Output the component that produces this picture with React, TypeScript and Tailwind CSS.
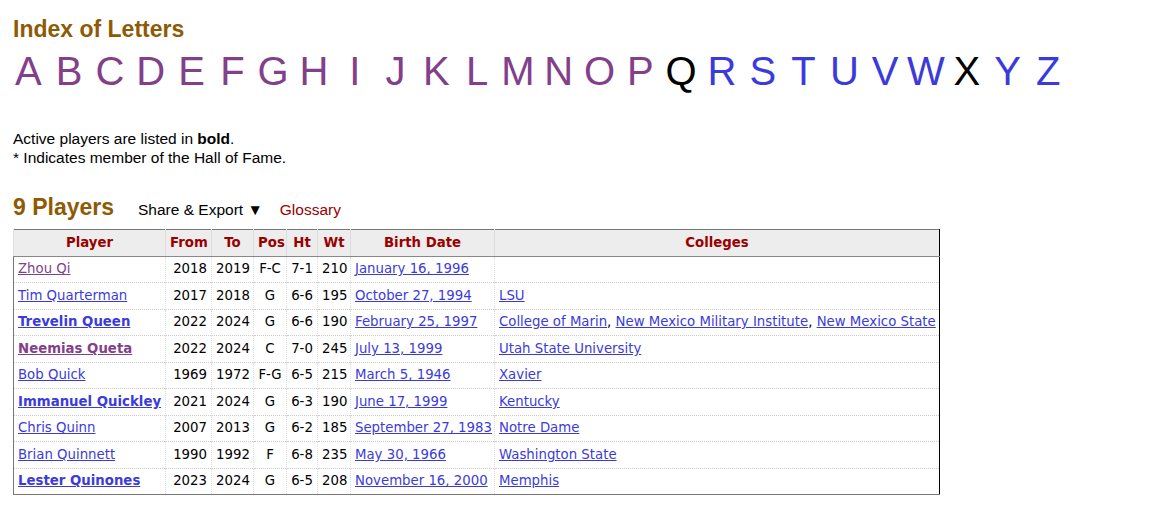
import React from 'react';

const LETTERS = 'ABCDEFGHIJKLMNOPQRSTUVWXYZ'.split('');
const VISITED = 'ABCDEFGHIJKLMNOP';

type Player = {
    name: string;
    active?: boolean;
    visited?: boolean;
    from: string;
    to: string;
    pos: string;
    ht: string;
    wt: string;
    birth: string;
    colleges: string[];
};

const players: Player[] = [
    { name: 'Zhou Qi', visited: true, from: '2018', to: '2019', pos: 'F-C', ht: '7-1', wt: '210', birth: 'January 16, 1996', colleges: [] },
    { name: 'Tim Quarterman', from: '2017', to: '2018', pos: 'G', ht: '6-6', wt: '195', birth: 'October 27, 1994', colleges: ['LSU'] },
    { name: 'Trevelin Queen', active: true, from: '2022', to: '2024', pos: 'G', ht: '6-6', wt: '190', birth: 'February 25, 1997', colleges: ['College of Marin', 'New Mexico Military Institute', 'New Mexico State'] },
    { name: 'Neemias Queta', active: true, visited: true, from: '2022', to: '2024', pos: 'C', ht: '7-0', wt: '245', birth: 'July 13, 1999', colleges: ['Utah State University'] },
    { name: 'Bob Quick', from: '1969', to: '1972', pos: 'F-G', ht: '6-5', wt: '215', birth: 'March 5, 1946', colleges: ['Xavier'] },
    { name: 'Immanuel Quickley', active: true, from: '2021', to: '2024', pos: 'G', ht: '6-3', wt: '190', birth: 'June 17, 1999', colleges: ['Kentucky'] },
    { name: 'Chris Quinn', from: '2007', to: '2013', pos: 'G', ht: '6-2', wt: '185', birth: 'September 27, 1983', colleges: ['Notre Dame'] },
    { name: 'Brian Quinnett', from: '1990', to: '1992', pos: 'F', ht: '6-8', wt: '235', birth: 'May 30, 1966', colleges: ['Washington State'] },
    { name: 'Lester Quinones', active: true, from: '2023', to: '2024', pos: 'G', ht: '6-5', wt: '208', birth: 'November 16, 2000', colleges: ['Memphis'] },
];

const th = 'h-[27px] pt-[1px] px-[4px] font-bold text-[#990000] text-center border-l border-l-[#dddddd] border-b border-b-[#888888] whitespace-nowrap overflow-hidden';
const td = 'h-[26.5px] px-[4px] border-l border-l-[#dddddd] border-t border-dotted border-t-[#cccccc] whitespace-nowrap overflow-visible';
const link = 'underline text-[#3b3bdb]';

export default function App() {
    return (
        <div className="min-h-screen bg-white pl-[13px] pt-[16px] text-black" style={{ fontFamily: '"Liberation Sans", Arial, sans-serif' }}>
            <h2 className="text-[23px] leading-[26.4px] font-bold text-[#8f5a04]">Index of Letters</h2>
            <div className="flex mt-[5px] -ml-[5px] text-[40px] leading-[48px]">
                {LETTERS.map(l => (
                    <span
                        key={l}
                        className={`w-[40.8px] text-center ${l === 'Q' || l === 'X' ? 'text-black' : VISITED.includes(l) ? 'text-[#833f8a]' : 'text-[#3b3bdb]'}`}
                    >
                        {l}
                    </span>
                ))}
            </div>

            <div className="mt-[34px] text-[15.5px] leading-[19px]">
                <p>Active players are listed in <b>bold</b>.</p>
                <p>* Indicates member of the Hall of Fame.</p>
            </div>

            <div className="flex items-baseline mt-[27px]">
                <h2 className="text-[23px] leading-[26.4px] font-bold text-[#8f5a04]">9 Players</h2>
                <span className="ml-[24px] text-[15.5px]">Share &amp; Export ▼</span>
                <span className="ml-[17px] text-[15.5px] text-[#990000]">Glossary</span>
            </div>

            <table
                className="mt-[7px] table-fixed border-collapse text-[13.3px] border-t border-l border-b border-r border-t-[#777777] border-l-[#777777] border-b-[#777777] border-r-black"
                style={{ fontFamily: '"DejaVu Sans", Verdana, sans-serif', width: 927 }}
            >
                <colgroup>
                    <col style={{ width: 152 }} />
                    <col style={{ width: 46 }} />
                    <col style={{ width: 42 }} />
                    <col style={{ width: 33 }} />
                    <col style={{ width: 31 }} />
                    <col style={{ width: 33 }} />
                    <col style={{ width: 144 }} />
                    <col />
                </colgroup>
                <thead>
                    <tr className="bg-[#ededed]">
                        <th className={th}>Player</th>
                        <th className={th}>From</th>
                        <th className={th}>To</th>
                        <th className={th}>Pos</th>
                        <th className={th}>Ht</th>
                        <th className={th}>Wt</th>
                        <th className={th}>Birth Date</th>
                        <th className={th}>Colleges</th>
                    </tr>
                </thead>
                <tbody>
                    {players.map((p, i) => (
                        <tr key={p.name} className={i === 0 ? '[&>td]:border-t-0' : ''}>
                            <td className={`${td} text-left`}>
                                <a className={`underline ${p.visited ? 'text-[#833f8a]' : 'text-[#3b3bdb]'} ${p.active ? 'font-bold' : ''}`}>{p.name}</a>
                            </td>
                            <td className={`${td} text-right`}>{p.from}</td>
                            <td className={`${td} text-right`}>{p.to}</td>
                            <td className={`${td} text-center`}>{p.pos}</td>
                            <td className={`${td} text-center`}>{p.ht}</td>
                            <td className={`${td} text-right`}>{p.wt}</td>
                            <td className={`${td} text-left`}>
                                <a className={link}>{p.birth}</a>
                            </td>
                            <td className={`${td} text-left`}>
                                {p.colleges.map((c, j) => (
                                    <React.Fragment key={c}>
                                        {j > 0 && ', '}
                                        <a className={link}>{c}</a>
                                    </React.Fragment>
                                ))}
                            </td>
                        </tr>
                    ))}
                </tbody>
            </table>
        </div>
    );
}
